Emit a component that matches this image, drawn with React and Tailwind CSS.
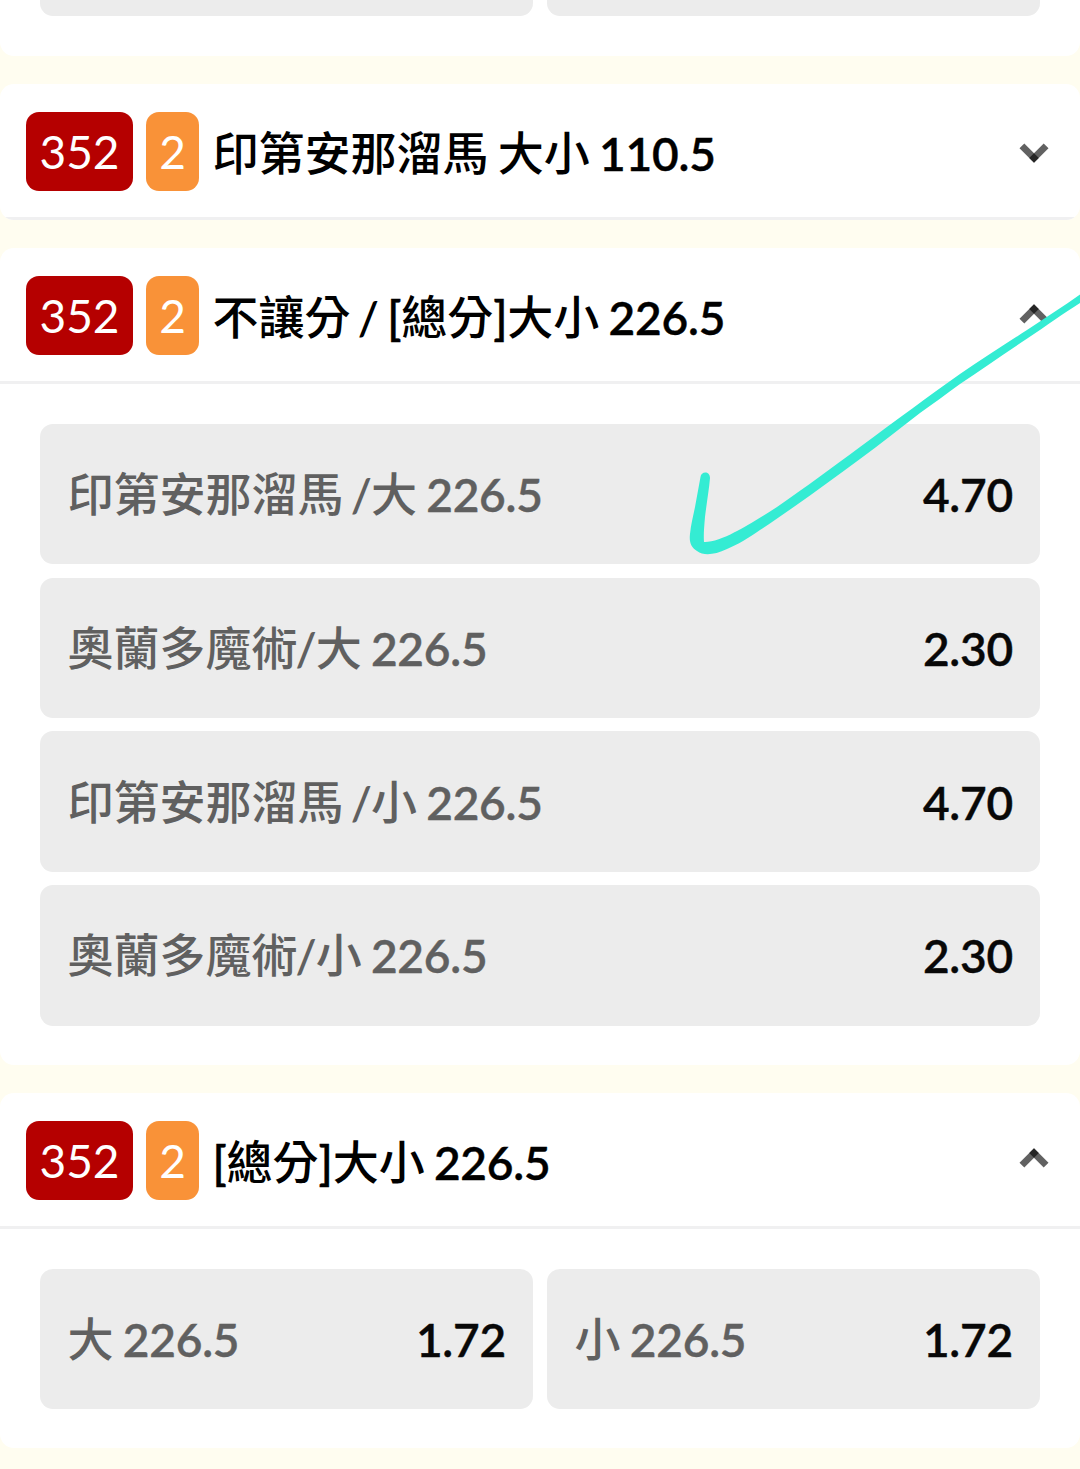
import React, { useState } from 'react';

const initialMarkets = [
  {
    id: 1,
    code: '352',
    count: '2',
    title: '印第安那溜馬 大小 110.5',
    open: false,
    layout: 'list',
    options: [],
  },
  {
    id: 2,
    code: '352',
    count: '2',
    title: '不讓分 / [總分]大小 226.5',
    open: true,
    layout: 'list',
    options: [
      { name: '印第安那溜馬 /大 226.5', odds: '4.70' },
      { name: '奧蘭多魔術/大 226.5', odds: '2.30' },
      { name: '印第安那溜馬 /小 226.5', odds: '4.70' },
      { name: '奧蘭多魔術/小 226.5', odds: '2.30' },
    ],
  },
  {
    id: 3,
    code: '352',
    count: '2',
    title: '[總分]大小 226.5',
    open: true,
    layout: 'grid',
    options: [
      { name: '大 226.5', odds: '1.72' },
      { name: '小 226.5', odds: '1.72' },
    ],
  },
];

// Chinese runs are set in a medium weight, latin runs and numbers in semibold
const MixedText = ({ text }) => (
  <span className="whitespace-pre [word-spacing:-2px]">
    {text.split(/([\u4e00-\u9fff]+|\/)/).map((part, i) => {
      if (part === '/') {
        return <span key={i} className="-mr-px -ml-0.5 font-semibold">{part}</span>;
      }
      return i % 2 === 1 ? (
        <span key={i} className="relative -top-px font-medium">{part}</span>
      ) : (
        <span key={i} className="font-semibold tracking-[-0.2px] [-webkit-text-stroke:0.4px_currentColor]">
          {part}
        </span>
      );
    })}
  </span>
);

// Two translucent bars, darker where they cross
const Chevron = ({ open }) => (
  <svg
    width="30"
    height="20"
    viewBox="0 0 30 20"
    className={`relative shrink-0 ${open ? '-top-0.5 rotate-180' : 'top-px'}`}
    stroke="#000"
    strokeOpacity="0.62"
    strokeWidth="6.8"
    fill="none"
  >
    <path d="M2.9 2.8 L17.4 17.3" />
    <path d="M27.1 2.8 L12.6 17.3" />
  </svg>
);

const OptionButton = ({ option }) => (
  <button className="flex h-[140.3px] w-full items-center justify-between rounded-[13px] bg-[#ececec] pt-[2px] pr-[27px] pl-[27.5px] text-left">
    <span className="text-[#606060]">
      <MixedText text={option.name} />
    </span>
    <span className="font-semibold tracking-[-0.2px] text-[#080808] [-webkit-text-stroke:0.4px_#080808]">
      {option.odds}
    </span>
  </button>
);

const MarketCard = ({ market, onToggle }) => (
  <section className="overflow-hidden rounded-[14px] bg-white">
    <header
      onClick={() => onToggle(market.id)}
      className="flex h-[136px] cursor-pointer items-center border-b-3 border-[#f0f0f1] pt-0.5 pr-[31px] pl-[26px]"
    >
      <span className="flex h-[79px] w-[107px] items-center justify-center rounded-[13px] bg-[#b50000] pt-px font-normal text-white">
        {market.code}
      </span>
      <span className="ml-[13px] flex h-[79px] w-[53px] items-center justify-center rounded-[13px] bg-[#f99238] pt-px font-normal text-white">
        {market.count}
      </span>
      <h2 className="ml-[13.5px] flex-1 pt-[5px] text-black">
        <MixedText text={market.title} />
      </h2>
      <Chevron open={market.open} />
    </header>

    {market.open && (
      <div
        className={`grid px-10 pt-10 pb-[39px] ${
          market.layout === 'grid' ? 'grid-cols-2 gap-x-[14px]' : 'grid-cols-1 gap-y-[13.45px]'
        }`}
      >
        {market.options.map((option) => (
          <OptionButton key={option.name} option={option} />
        ))}
      </div>
    )}
  </section>
);

// Freehand pen stroke lying over the list
const PenMark = () => (
  <svg
    className="pointer-events-none absolute top-0 left-0"
    width="1080"
    height="1469"
    viewBox="0 0 1080 1469"
    fill="#34ecd3"
  >
    <path d="M700.5 477 C701 471 710 470.5 710 478 C709 490 706.5 504 705 517 C704 528 703.5 536 704 542 C711 542.5 724 538 734 532.5 C745 527 763 516 777 507 C806 487 832 467.5 860 447 C879 433 896 420 913 408 C928 397 944 385 960 374 C982 359 1004 345 1027 330 C1045 318 1064 306 1080 294.5 L1080 303 C1064 313 1046 326 1028 338 C1004 354 982 369 960 384 C946 394 933 404 920 413 C900 428 881 444 860 459 C838 475 815 492 793 507.5 C782 515 771 523 760 530 C748 538 739 544 727 549 C714 555 704 556 697 551 C691 547 689 542 690 534 C691 524 693 517 695 507 Z" />
  </svg>
);

export default function App() {
  const [markets, setMarkets] = useState(initialMarkets);

  const handleToggle = (id) => {
    setMarkets((prev) => prev.map((m) => (m.id === id ? { ...m, open: !m.open } : m)));
  };

  return (
    <div className="relative h-[1469px] w-[1080px] overflow-hidden bg-[#fffdf0] font-['Lato','Noto_Sans_CJK_TC',sans-serif] text-[46px] leading-none">
      <div className="flex flex-col gap-7">
        {/* Tail of the market scrolled off the top */}
        <div className="grid h-14 grid-cols-2 gap-x-[14px] rounded-b-[14px] bg-white px-10">
          <div className="h-4 rounded-b-[13px] bg-[#ececec]"></div>
          <div className="h-4 rounded-b-[13px] bg-[#ececec]"></div>
        </div>

        {markets.map((market) => (
          <MarketCard key={market.id} market={market} onToggle={handleToggle} />
        ))}
      </div>
      <PenMark />
    </div>
  );
}
